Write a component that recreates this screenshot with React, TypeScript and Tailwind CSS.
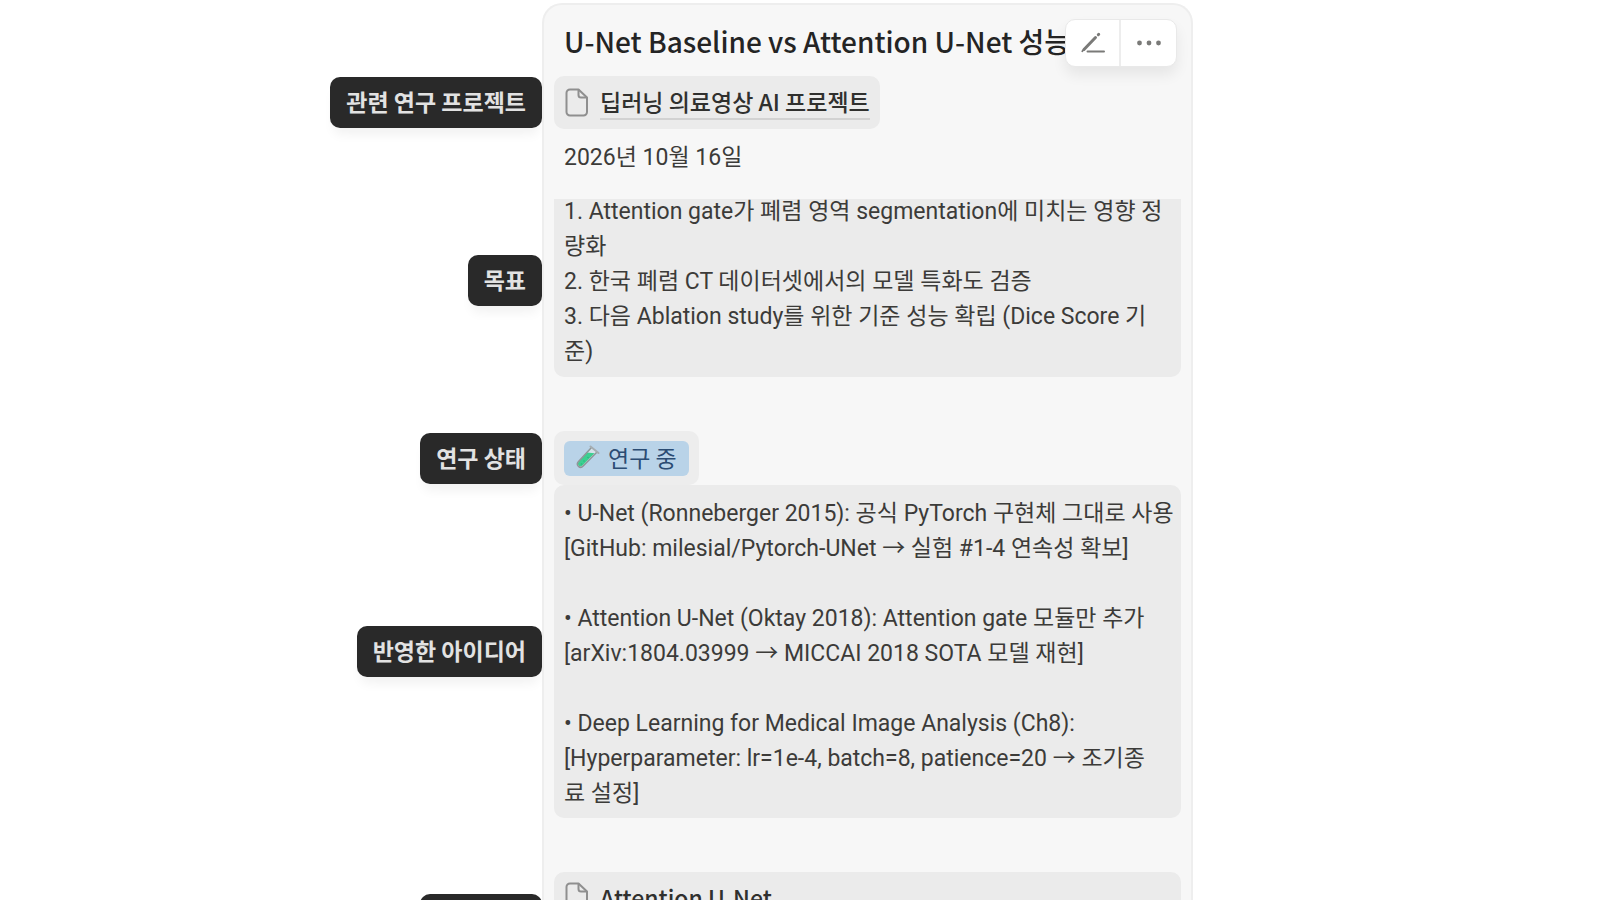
import type { ReactNode } from 'react'

type RowProps = {
  label?: string
  first?: boolean
  children?: ReactNode
}

const goals = `1. Attention gate가 폐렴 영역 segmentation에 미치는 영향 정
량화
2. 한국 폐렴 CT 데이터셋에서의 모델 특화도 검증
3. 다음 Ablation study를 위한 기준 성능 확립 (Dice Score 기
준)`

const ideas = `• U-Net (Ronneberger 2015): 공식 PyTorch 구현체 그대로 사용
[GitHub: milesial/Pytorch-UNet → 실험 #1-4 연속성 확보]

• Attention U-Net (Oktay 2018): Attention gate 모듈만 추가
[arXiv:1804.03999 → MICCAI 2018 SOTA 모델 재현]

• Deep Learning for Medical Image Analysis (Ch8):
[Hyperparameter: lr=1e-4, batch=8, patience=20 → 조기종
료 설정]`

function PageIcon() {
  return (
    <svg width="24" height="30" viewBox="0 0 24 30" fill="none" stroke="#8f8f8f" strokeWidth="2" strokeLinejoin="round" className="shrink-0">
      <path d="M6 1.500h8.500L23 9.500V24a3.500 3.500 0 0 1-3.500 3.500H6A3.500 3.500 0 0 1 2.500 24V5A3.500 3.500 0 0 1 6 1.500z" />
      <path d="M14.500 1.500V7a2.500 2.500 0 0 0 2.500 2.500h6" />
    </svg>
  )
}

function EditIcon() {
  return (
    <svg width="26" height="22" viewBox="0 0 26 22" fill="none" stroke="#7a7a78" strokeLinecap="round">
      <path d="M4 17.500L15.500 5.500" strokeWidth="3" />
      <path d="M18.300 2.700l.4-.4" strokeWidth="3" />
      <path d="M2.300 19.300l1.200-1.600" strokeWidth="1.800" />
      <path d="M7.500 19.500H24" strokeWidth="2" />
    </svg>
  )
}

function MoreIcon() {
  return (
    <svg width="26" height="6" viewBox="0 0 26 6" fill="#7a7a78">
      <circle cx="3.500" cy="3" r="2.400" />
      <circle cx="13" cy="3" r="2.400" />
      <circle cx="22.500" cy="3" r="2.400" />
    </svg>
  )
}

function TestTubeIcon() {
  return (
    <svg width="24" height="24" viewBox="0 0 24 24" fill="none" className="shrink-0">
      <path d="M15.500 2.500L2.500 16.500c-1.600 1.800-1.400 3.600 0 4.900s3.200 1.200 4.700-.4L21 7z" fill="#d6e2ea" />
      <path d="M11 7.500L3 16.300c-1.500 1.700-1.300 3.300-.2 4.400 1.200 1.100 2.700 1 4-.4L18.500 8.300z" fill="#3ccf91" />
      <path d="M15.500 2.500L2.500 16.500c-1.600 1.800-1.400 3.600 0 4.900s3.200 1.200 4.700-.4L21 7" stroke="#8f9699" strokeWidth="1.500" />
      <path d="M14.500 1.500L22.500 8" stroke="#a5adb1" strokeWidth="2" strokeLinecap="round" />
      <circle cx="8" cy="16" r=".8" fill="#2bb880" />
      <circle cx="12" cy="12.500" r=".8" fill="#2bb880" />
      <circle cx="5.500" cy="19" r=".8" fill="#2bb880" />
    </svg>
  )
}

// One slice of the card, with its dark callout hanging off the left edge
function Row({ label, first = false, children }: RowProps) {
  return (
    <div className="grid grid-cols-[542fr_651fr_407fr]">
      <div className="flex items-center justify-end">
        {label && (
          <span className="rounded-[10px] bg-[#292929] px-4 pt-[7px] pb-[9px] font-bold text-[#e2e2e2] shadow-[0_10px_12px_-4px_rgba(0,0,0,0.06)]">
            {label}
          </span>
        )}
      </div>
      <div
        className={`border-x-2 border-[#eeeeee] bg-[#f7f7f7] px-2.5 ${
          first ? 'rounded-t-[20px] border-t-2' : ''
        }`}
      >
        {children}
      </div>
    </div>
  )
}

function Spacer() {
  return (
    <Row>
      <div className="h-[54px]" />
    </Row>
  )
}

function PageLink({ href, title }: { href: string; title: string }) {
  return (
    <a href={href} className="border-b-2 border-[#d2d2d2] pb-0.5 leading-[30px] font-medium text-[#30302e]">
      {title}
    </a>
  )
}

export default function App() {
  return (
    <main className="h-screen overflow-hidden bg-white pt-[3px] font-['Noto_Sans_CJK_KR',sans-serif] text-[23px] leading-[35px] text-[#3c3b39]">
      <Row first>
        <div className="relative h-[71px] px-2.5 pt-[19px]">
          <h1 className="overflow-hidden text-[28px] font-medium whitespace-nowrap text-[#242424]">
            U-Net Baseline vs Attention U-Net 성능
          </h1>
          <div className="absolute top-3.5 right-1 flex h-12 divide-x-2 divide-[#ededed] overflow-hidden rounded-[10px] border border-[#e9e9e9] bg-white shadow-[0_8px_14px_rgba(0,0,0,0.07)]">
            <button type="button" aria-label="편집" className="flex w-[55px] items-center justify-center">
              <EditIcon />
            </button>
            <button type="button" aria-label="더 보기" className="flex w-[55px] items-center justify-center">
              <MoreIcon />
            </button>
          </div>
        </div>
      </Row>

      <Row label="관련 연구 프로젝트">
        <div className="flex h-[53px] w-fit items-center gap-3 rounded-[10px] bg-[#ebebeb] px-2.5">
          <PageIcon />
          <PageLink href="#project" title="딥러닝 의료영상 AI 프로젝트" />
        </div>
      </Row>

      <Row>
        <p className="h-[55px] px-2.5 pt-[11px] font-[Roboto,'Noto_Sans_CJK_KR',sans-serif]">2026년 10월 16일</p>
      </Row>

      <Row label="목표">
        <div className="pt-[15px]">
          <div className="overflow-hidden rounded-b-[10px] bg-[#ebebeb] pr-1 pb-2 pl-2.5">
            <p className="-mt-[5px] font-[Roboto,'Noto_Sans_CJK_KR',sans-serif] whitespace-pre-line">{goals}</p>
          </div>
        </div>
      </Row>

      <Spacer />

      <Row label="연구 상태">
        <div className="flex h-[54px] w-fit items-center rounded-[10px] bg-[#ededed] px-2.5">
          <span className="flex items-center gap-2 rounded-md bg-[#b9d3e8] px-3 pb-0.5 leading-[33px] text-[#2b4c73]">
            <TestTubeIcon />
            연구 중
          </span>
        </div>
      </Row>

      <Row label="반영한 아이디어">
        <p className="rounded-[10px] bg-[#ebebeb] pt-[11px] pr-1 pb-[7px] pl-2.5 font-[Roboto,'Noto_Sans_CJK_KR',sans-serif] whitespace-pre-line">
          {ideas}
        </p>
      </Row>

      <Spacer />

      <Row label="관련 논문">
        <div className="flex h-[94px] items-start gap-3 rounded-[10px] bg-[#ebebeb] px-2.5 pt-2.5">
          <PageIcon />
          <PageLink href="#attention-u-net" title="Attention U-Net" />
        </div>
      </Row>
    </main>
  )
}
